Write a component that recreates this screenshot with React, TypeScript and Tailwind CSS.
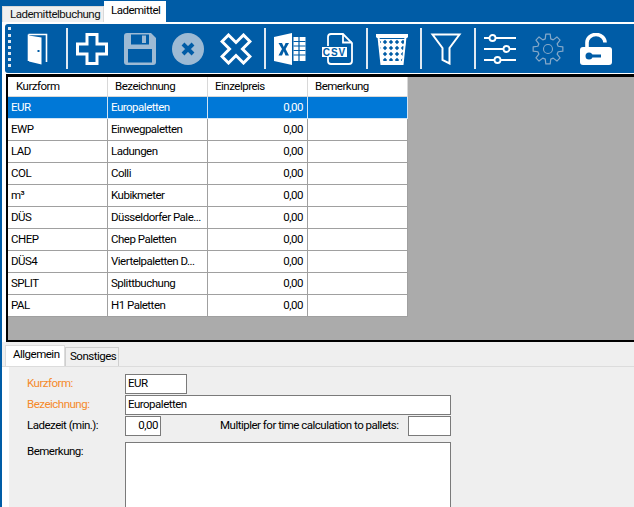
const rows = [
  ["EUR", "Europaletten"],
  ["EWP", "Einwegpaletten"],
  ["LAD", "Ladungen"],
  ["COL", "Colli"],
  ["m³", "Kubikmeter"],
  ["DÜS", "Düsseldorfer Pale..."],
  ["CHEP", "Chep Paletten"],
  ["DÜS4", "Viertelpaletten D..."],
  ["SPLIT", "Splittbuchung"],
  ["PAL", "H1 Paletten"],
];

const DIM = "#9dbad4";
const BLUE = "#005ca6";

function gearPath() {
  const teeth = 8;
  const pts: string[] = [];
  for (let i = 0; i < teeth; i++) {
    const a = (i / teeth) * Math.PI * 2 - Math.PI / 2;
    const step = Math.PI / 2 / teeth;
    const pairs: [number, number][] = [
      [10.5, a - step * 1.35],
      [15, a - step * 0.75],
      [15, a + step * 0.75],
      [10.5, a + step * 1.35],
    ];
    pairs.forEach(([r, t]) => {
      pts.push(`${(16 + r * Math.cos(t)).toFixed(2)} ${(16 + r * Math.sin(t)).toFixed(2)}`);
    });
  }
  return "M" + pts.join("L") + "Z";
}

function Icon({ name }: { name: string }) {
  if (name === "door") {
    return (
      <svg viewBox="0 0 32 32" className="w-8 h-8">
        <path d="M6.5 1.5H24.5V29" fill="none" stroke="white" strokeWidth="1.6" />
        <path d="M6.500 1.500V28" fill="none" stroke="white" strokeWidth="1.6" />
        <path d="M7 2.500L19.500 4.500V31.500L7 28.500Z" fill="white" />
        <rect x="15.500" y="17" width="2" height="2" fill={BLUE} />
      </svg>
    );
  }
  if (name === "plus") {
    return (
      <svg viewBox="0 0 32 32" className="w-8 h-8">
        <path d="M11 1.5H21V11H30.5V21H21V30.5H11V21H1.5V11H11Z" fill="none" stroke="white" strokeWidth="3" />
      </svg>
    );
  }
  if (name === "save") {
    return (
      <svg viewBox="0 0 32 32" className="w-8 h-8">
        <path d="M3 0H27L32 5V29A3 3 0 0 1 29 32H3A3 3 0 0 1 0 29V3A3 3 0 0 1 3 0Z" fill={DIM} />
        <rect x="7" y="1.5" width="18" height="10" fill={BLUE} />
        <rect x="18" y="2.5" width="4" height="7.5" fill={DIM} />
        <rect x="4" y="16" width="24" height="13.5" fill={BLUE} />
      </svg>
    );
  }
  if (name === "cancel") {
    return (
      <svg viewBox="0 0 32 32" className="w-8 h-8">
        <circle cx="16" cy="16" r="16" fill={DIM} />
        <path d="M11 11L21 21M21 11L11 21" stroke={BLUE} strokeWidth="4" />
      </svg>
    );
  }
  if (name === "close") {
    return (
      <svg viewBox="0 0 32 32" className="w-8 h-8">
        <path d="M8.5 2L16 9.5L23.5 2L30 8.5L22.5 16L30 23.5L23.5 30L16 22.5L8.5 30L2 23.5L9.5 16L2 8.5Z" fill="none" stroke="white" strokeWidth="3" />
      </svg>
    );
  }
  if (name === "excel") {
    return (
      <svg viewBox="0 0 32 32" className="w-8 h-8">
        <path d="M0 4L18 0V32L0 28Z" fill="white" />
        <path d="M4.5 10H8L9.8 14L11.6 10H15L11.6 16L15 22.5H11.5L9.8 18.3L8 22.5H4.5L8 16Z" fill={BLUE} />
        <rect x="19.5" y="4" width="12" height="24" fill="white" />
        <path d="M25 4V28M19.5 8.5H31.5M19.5 13H31.5M19.5 17.5H31.5M19.5 22H31.5" stroke={BLUE} strokeWidth="1.2" />
      </svg>
    );
  }
  if (name === "csv") {
    return (
      <svg viewBox="0 0 32 32" className="w-8 h-8">
        <path d="M6 13V4Q6 1 9 1H21L30 10V28Q30 31 27 31H9Q6 31 6 28V24" fill="none" stroke="white" strokeWidth="1.8" />
        <path d="M21 1V9.500H30" fill="none" stroke="white" strokeWidth="1.8" />
        <rect x="0" y="14" width="25" height="10" fill="white" />
        <text x="12.5" y="22.500" textAnchor="middle" fontSize="10" fontWeight="700" letterSpacing="1" fill={BLUE} fontFamily="'Liberation Sans', sans-serif">CSV</text>
      </svg>
    );
  }
  if (name === "trash") {
    return (
      <svg viewBox="0 0 32 32" className="w-8 h-8">
        <defs>
          <pattern id="lattice" width="6" height="6" patternUnits="userSpaceOnUse">
            <rect width="6" height="6" fill="white" />
            <path d="M3 0.8L5.2 3L3 5.2L0.8 3Z" fill={BLUE} />
          </pattern>
        </defs>
        <path d="M0 1H32V4L31 5H1L0 4Z" fill="white" />
        <path d="M2 6H30L26.5 32H5.5Z" fill="url(#lattice)" />
        <path d="M5 28H27L26.5 32H5.5Z" fill="white" />
        <path d="M2.5 4L5.5 32M29.500 4L26.5 32" stroke="white" strokeWidth="2" />
      </svg>
    );
  }
  if (name === "funnel") {
    return (
      <svg viewBox="0 0 32 32" className="w-8 h-8">
        <path d="M2.5 1.5H29.5L19.5 15V30.5L12.5 27V15Z" fill="none" stroke="white" strokeWidth="2" />
      </svg>
    );
  }
  if (name === "sliders") {
    return (
      <svg viewBox="0 0 32 32" className="w-8 h-8">
        <path d="M0 5H5M12 5H32M0 16H19M26 16H32M0 27H10M17 27H32" stroke="white" strokeWidth="1.8" />
        <circle cx="8.500" cy="5" r="3" fill="none" stroke="white" strokeWidth="1.8" />
        <circle cx="22.500" cy="16" r="3" fill="none" stroke="white" strokeWidth="1.8" />
        <circle cx="13.500" cy="27" r="3" fill="none" stroke="white" strokeWidth="1.8" />
      </svg>
    );
  }
  if (name === "gear") {
    return (
      <svg viewBox="0 0 32 32" className="w-8 h-8">
        <path d={gearPath()} fill="none" stroke="#86a9c9" strokeWidth="1.2" strokeLinejoin="round" />
        <circle cx="16" cy="16" r="4.500" fill="none" stroke="#86a9c9" strokeWidth="1.1" />
      </svg>
    );
  }
  return (
    <svg viewBox="0 0 32 32" className="w-8 h-8">
      <path d="M7 15V9.500A9 8 0 0 1 25 9.500" fill="none" stroke="white" strokeWidth="3.600" />
      <rect x="0" y="14" width="32" height="18" rx="3" fill="white" />
      <circle cx="9" cy="23" r="3.500" fill={BLUE} />
      <rect x="9" y="21.500" width="12" height="3" fill={BLUE} />
    </svg>
  );
}

function Sep() {
  return <div className="ml-1 w-[2px] h-[41px] bg-[#dfe9f2]" />;
}

function Tool({ name }: { name: string }) {
  return (
    <div className="w-12 flex justify-center">
      <Icon name={name} />
    </div>
  );
}

function Field({ className, children }: { className: string; children?: React.ReactNode }) {
  return (
    <div className={`h-[20px] bg-white border border-[#7a7a7a] flex items-center px-[2px] ${className}`}>
      {children}
    </div>
  );
}

export default function App() {
  return (
    <div className="w-[634px] h-[507px] overflow-hidden flex flex-col bg-[#005ca6] text-[11.5px] tracking-[-0.5px] leading-none text-black whitespace-nowrap font-['Roboto',sans-serif]">
      <div className="h-[22px] flex items-end pl-[2px] shrink-0">
        <div className="w-[102px] h-[16px] bg-[#f0f0f0] border border-b-0 border-[#d9d9d9] flex items-center pl-[7px] text-[#111]">
          Lademittelbuchung
        </div>
        <div className="w-[62px] h-[21px] bg-white flex items-center pl-[7px] pb-[2px]">Lademittel</div>
      </div>

      <div className="flex-1 ml-[2px] bg-[#efefef] flex flex-col min-h-0">
        <div className="bg-white pl-[3px] pt-[2px]">
          <div className="h-[49px] bg-[#005ca6] rounded-l-[3px] flex items-center pl-[3px]">
            <div className="w-[3px] h-[40px] mr-[3px] border-l-[3px] border-dotted border-[#dfe9f2] -mt-[3px]" />
            <Tool name="door" />
            <Sep />
            <Tool name="plus" />
            <Tool name="save" />
            <Tool name="cancel" />
            <Tool name="close" />
            <Sep />
            <Tool name="excel" />
            <Tool name="csv" />
            <Sep />
            <Tool name="trash" />
            <Sep />
            <Tool name="funnel" />
            <Sep />
            <Tool name="sliders" />
            <Tool name="gear" />
            <Tool name="lock" />
          </div>
        </div>

        <div className="bg-white pt-[1px] pl-1">
          <div className="h-[268px] bg-[#ababab] border-l-2 border-t-[3px] border-b-2 border-black">
            <div className="grid grid-cols-[100px_100px_100px_100px] w-[400px]">
              {["Kurzform", "Bezeichnung", "Einzelpreis", "Bemerkung"].map((h, i) => (
                <div
                  key={h}
                  className={`h-[20px] bg-white border-r border-b border-[#d8d8d8] flex items-center ${i === 0 ? "pl-2" : "pl-[7px]"}`}
                >
                  {h}
                </div>
              ))}
              {rows.map(([code, name], i) => {
                const selected = i === 0;
                const cell = `h-[22px] border-r border-b flex items-center ${
                  selected ? "bg-[#0078d7] text-white border-[#d0e4f5]" : "bg-white border-[#a0a0a0]"
                }`;
                return (
                  <div key={code} className="contents">
                    <div className={`${cell} pl-[3px]`}>{code}</div>
                    <div className={`${cell} pl-[3px]`}>{name}</div>
                    <div className={`${cell} justify-end pr-[4px]`}>0,00</div>
                    <div className={cell} />
                  </div>
                );
              })}
            </div>
          </div>
        </div>

        <div className="flex flex-col flex-1 min-h-0">
          <div className="h-[25px] flex items-end pl-[3px] border-b border-[#dcdcdc] shrink-0">
            <div className="w-[60px] h-[21px] bg-white border border-b-0 border-[#dcdcdc] flex items-center pl-[7px] pb-[3px]">
              Allgemein
            </div>
            <div className="w-[54px] h-[19px] bg-[#f0f0f0] border border-b-0 border-[#cfcfcf] flex items-center pl-[4px]">
              Sonstiges
            </div>
          </div>
          <div className="flex-1 bg-white pl-[7px] min-h-0">
            <div className="h-full bg-[#efefef] pl-[18px] pt-[7px] flex flex-col gap-[1px]">
              <div className="flex items-center">
                <div className="w-[98px] text-[#f58a2b]">Kurzform:</div>
                <Field className="w-[62px]">EUR</Field>
              </div>
              <div className="flex items-center">
                <div className="w-[98px] text-[#f58a2b]">Bezeichnung:</div>
                <Field className="w-[326px]">Europaletten</Field>
              </div>
              <div className="flex items-center">
                <div className="w-[98px]">Ladezeit (min.):</div>
                <Field className="w-[36px] justify-end">0,00</Field>
                <div className="ml-[59px] w-[188px]">Multipler for time calculation to pallets:</div>
                <Field className="w-[43px]" />
              </div>
              <div className="flex mt-[5px]">
                <div className="w-[98px] pt-[4px]">Bemerkung:</div>
                <div className="w-[326px] h-[100px] bg-white border border-[#7a7a7a]" />
              </div>
            </div>
          </div>
        </div>
      </div>
    </div>
  );
}
